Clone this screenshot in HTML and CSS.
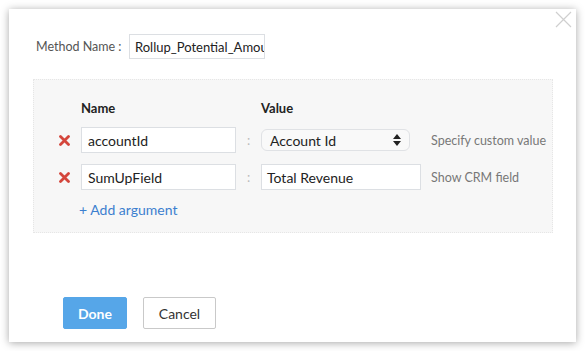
FILE: index.html
```html
<!DOCTYPE html>
<html lang="en">
<head>
  <meta charset="UTF-8" />
  <title>Method Arguments</title>
  <link rel="stylesheet" href="styles.css">
</head>
<body>
  <div class="dialog">
    <button class="close" aria-label="Close">
      <svg width="17" height="17" viewBox="0 0 17 17"><path d="M1 1 L16 16 M16 1 L1 16" stroke="#cfcfcf" stroke-width="1.2" fill="none"/></svg>
    </button>

    <div class="method-row">
      <label class="method-label">Method Name :</label>
      <div class="text-box method-input">Rollup_Potential_Amount</div>
    </div>

    <!-- Arguments -->
    <div class="panel">
      <div class="arg-grid">
        <span></span>
        <span class="col-head">Name</span>
        <span></span>
        <span class="col-head">Value</span>
        <span></span>

        <span class="remove"><svg width="11" height="11" viewBox="0 0 11 11"><path d="M1.5 1.5 L9.5 9.5 M9.5 1.5 L1.5 9.5" stroke="#d4463c" stroke-width="2.8" stroke-linecap="round"/></svg></span>
        <div class="text-box">accountId</div>
        <span class="colon">:</span>
        <div class="select-box">Account Id
          <svg class="updown" width="8" height="12" viewBox="0 0 8 12"><path d="M4 0 L8 5 L0 5 Z M0 7 L8 7 L4 12 Z" fill="#222"/></svg>
        </div>
        <span class="hint">Specify custom value</span>

        <span class="remove"><svg width="11" height="11" viewBox="0 0 11 11"><path d="M1.5 1.5 L9.5 9.5 M9.5 1.5 L1.5 9.5" stroke="#d4463c" stroke-width="2.8" stroke-linecap="round"/></svg></span>
        <div class="text-box">SumUpField</div>
        <span class="colon">:</span>
        <div class="text-box value-input">Total Revenue</div>
        <span class="hint">Show CRM field</span>
      </div>
      <a class="add-arg" href="#">+ Add argument</a>
    </div>

    <div class="actions">
      <button class="btn btn-primary">Done</button>
      <button class="btn btn-plain">Cancel</button>
    </div>
  </div>
</body>
</html>
```

FILE: styles.css
```css
:root {
  --text: #222;
  --muted: #777;
  --border: #dcdfe3;
  --panel: #f7f7f7;
  --accent: #3c7fcf;
  --primary: #56a6e8;
}

body {
  margin: 0;
  background: #fff;
  font-family: 'Lato', 'Open Sans', sans-serif;
  color: var(--text);
}

.dialog {
  position: relative;
  margin: 9px;
  width: 567px;
  height: 333px;
  box-sizing: border-box;
  padding: 25px 0 0 24px;
  background: #fff;
  box-shadow: 0 1px 8px rgba(0, 0, 0, 0.35);
}

.close {
  position: absolute;
  top: 2px;
  right: 4px;
  padding: 0;
  border: none;
  background: none;
}

.method-row {
  display: flex;
  align-items: center;
  padding-left: 3px;
}

.method-label {
  width: 93px;
  font-size: 12.5px;
  color: #555;
}

.text-box {
  box-sizing: border-box;
  height: 26px;
  padding: 0 6px;
  display: flex;
  align-items: center;
  background: #fff;
  border: 1px solid var(--border);
  font-size: 14px;
  white-space: nowrap;
  overflow: hidden;
}

.method-input {
  width: 136px;
  height: 25px;
  font-size: 13px;
  padding-left: 5px;
}

.panel {
  margin-top: 20px;
  width: 520px;
  height: 154px;
  box-sizing: border-box;
  padding: 20px 0 0 22px;
  background: var(--panel);
  border: 1px dotted #e6e6e6;
}

.arg-grid {
  display: grid;
  grid-template-columns: 25px 155px 25px 160px auto;
  grid-template-rows: 16px 26px 26px;
  row-gap: 11px;
  align-items: center;
}

.col-head {
  font-size: 13px;
  font-weight: 700;
}

.remove {
  display: flex;
  align-items: center;
  padding-left: 3px;
}

.colon {
  text-align: center;
  color: #bbb;
  font-size: 13px;
}

.select-box {
  box-sizing: border-box;
  width: 149px;
  height: 22px;
  padding: 0 8px;
  display: flex;
  align-items: center;
  justify-content: space-between;
  background: #f9f9f9;
  border: 1px solid #e0e2e5;
  border-radius: 6px;
  font-size: 14px;
}

.value-input {
  padding-left: 5px;
}

.hint {
  margin-left: 10px;
  font-size: 12.5px;
  color: var(--muted);
}

.add-arg {
  display: inline-block;
  margin-top: 11px;
  margin-left: 23px;
  font-size: 14px;
  color: var(--accent);
  text-decoration: none;
}

.actions {
  display: flex;
  gap: 16px;
  margin: 64px 0 0 30px;
}

.btn {
  height: 32px;
  box-sizing: border-box;
  font-family: inherit;
  font-size: 14px;
  border-radius: 2px;
  cursor: pointer;
}

.btn-primary {
  width: 64px;
  background: var(--primary);
  color: #fff;
  font-weight: 700;
  border: 1px solid var(--primary);
}

.btn-plain {
  width: 73px;
  background: #fff;
  color: #333;
  border: 1px solid #c9c9c9;
}
```
